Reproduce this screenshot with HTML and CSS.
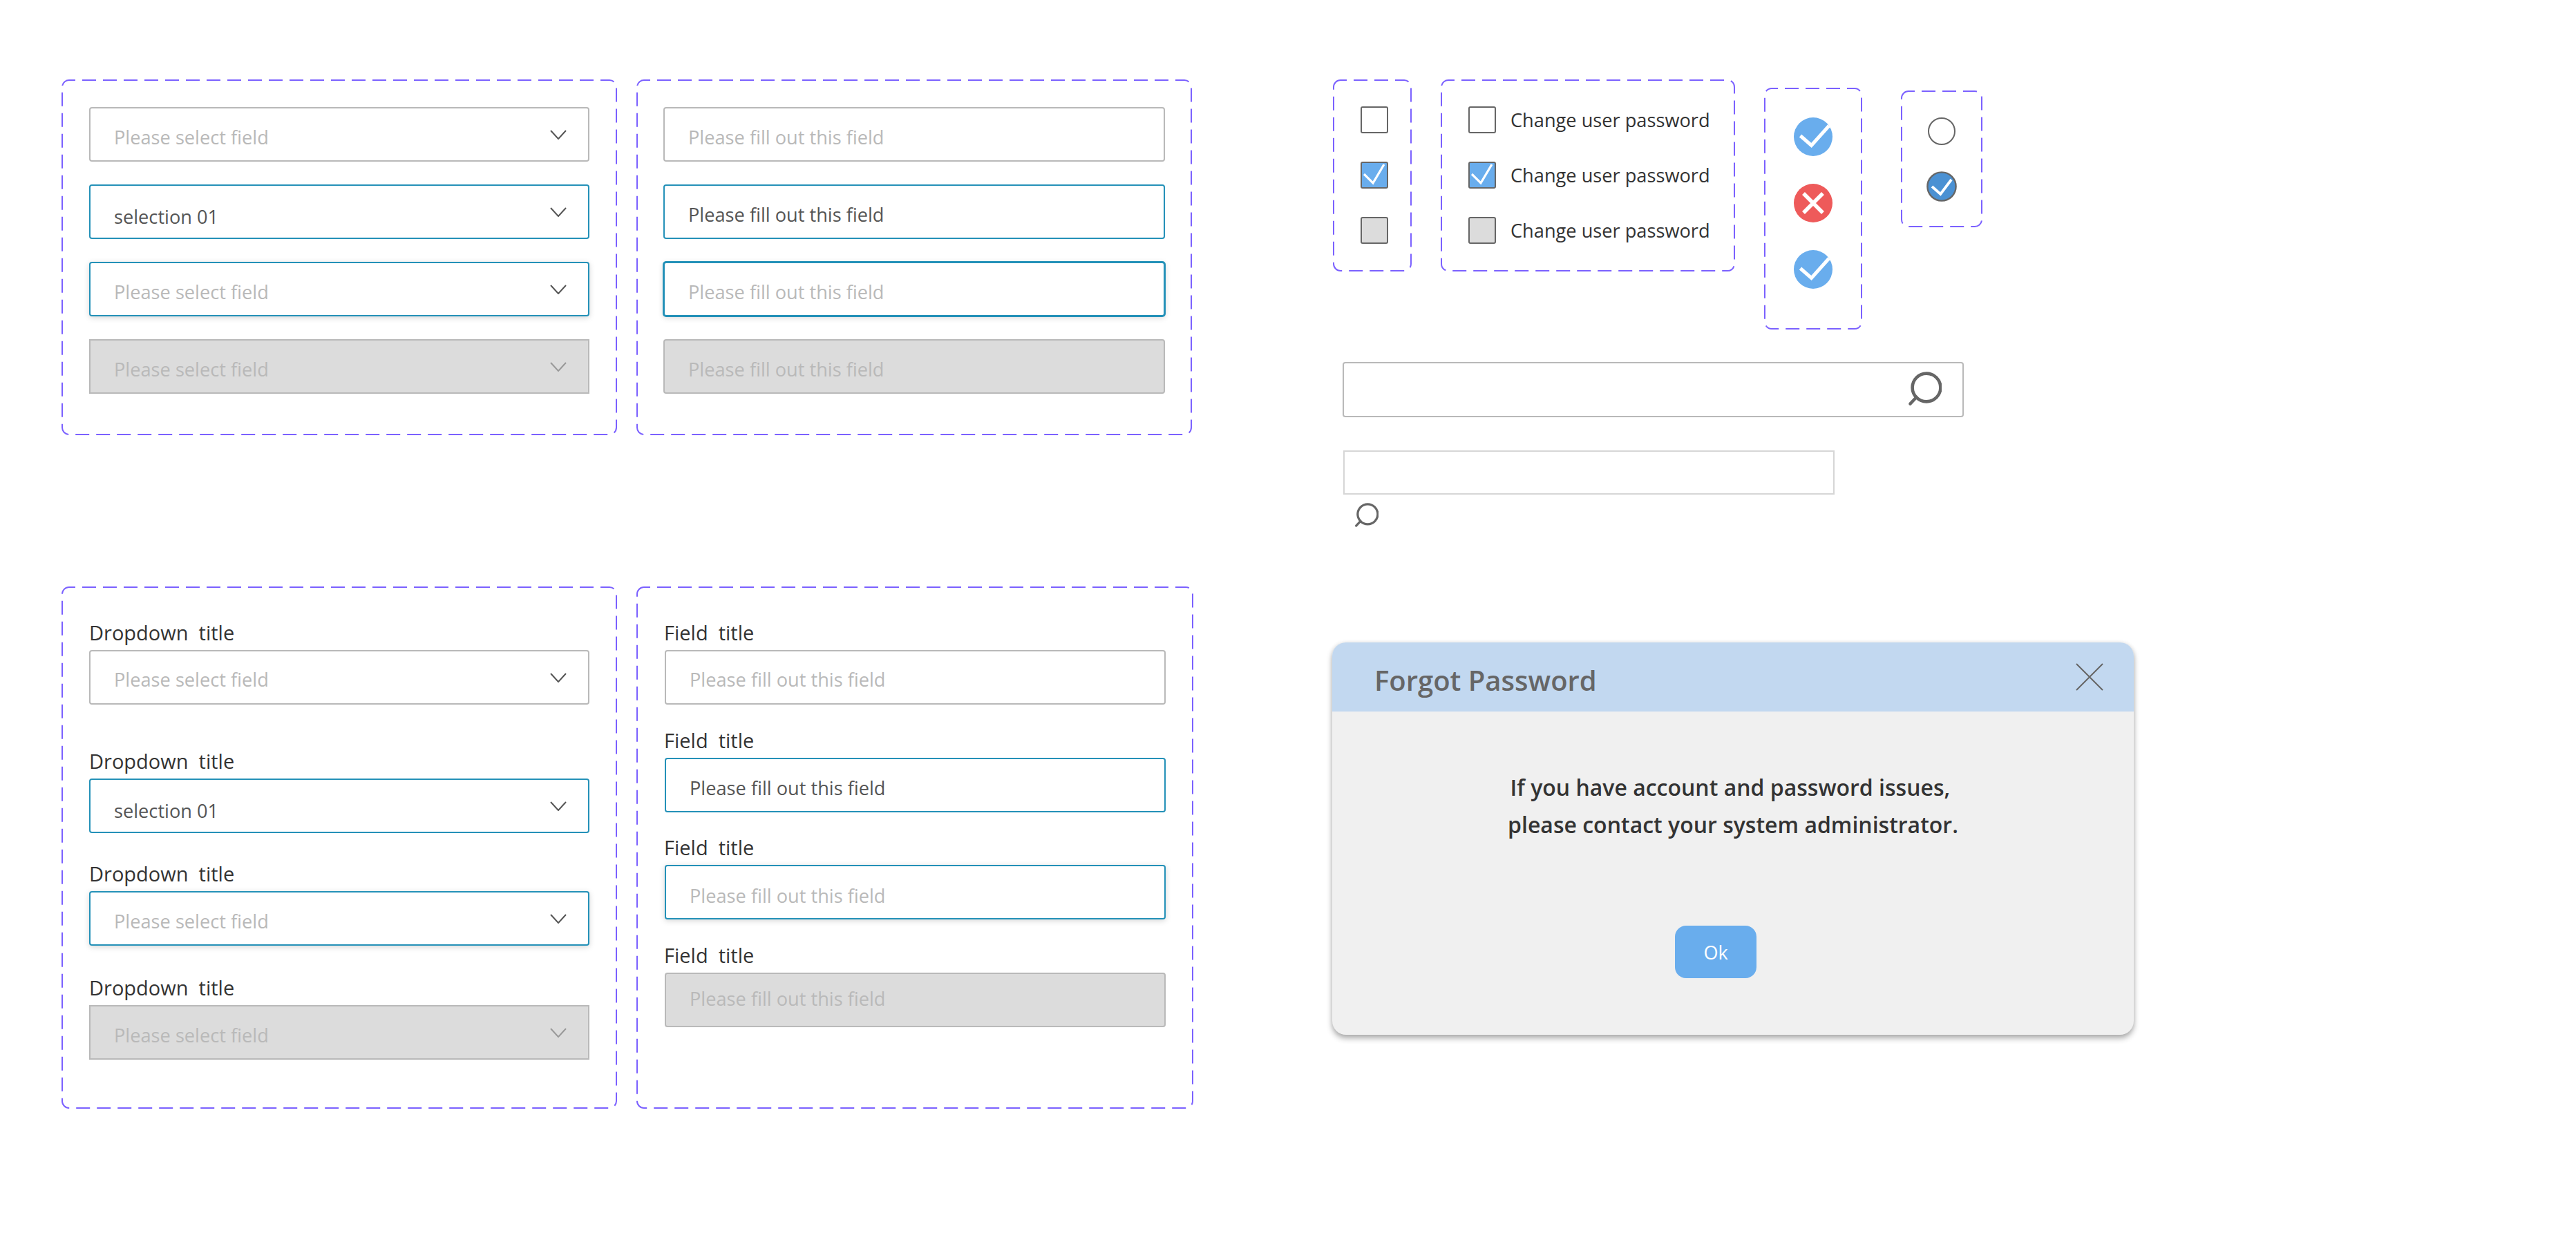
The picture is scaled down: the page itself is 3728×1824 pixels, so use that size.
FILE: index.html
```html
<!DOCTYPE html>
<html lang="en">
<head>
<meta charset="utf-8">
<title>Form components</title>
<link rel="stylesheet" href="styles.css">
</head>
<body>
<svg class="defs" width="0" height="0" aria-hidden="true">
  <symbol id="chev" viewBox="0 0 24 14"><path d="M1 1 L12 13 L23 1" fill="none" stroke="currentColor" stroke-width="2"/></symbol>
  <symbol id="box-check" viewBox="0 0 40 39"><path d="M5 18 L18 31 L34 4" fill="none" stroke="#fff" stroke-width="3.2"/></symbol>
  <symbol id="status-ok" viewBox="0 0 56 56"><circle cx="28" cy="28" r="28" fill="#69aded"/><path d="M9.5 26.5 L25.5 40.5 L51 12" fill="none" stroke="#fff" stroke-width="5"/></symbol>
  <symbol id="status-err" viewBox="0 0 56 56"><circle cx="28" cy="28" r="28" fill="#ee5a5a"/><path d="M14 14 L42 42 M42 14 L14 42" fill="none" stroke="#fff" stroke-width="5.5"/></symbol>
  <symbol id="mag" viewBox="0 0 52 52"><circle cx="30" cy="23" r="20.4" fill="none" stroke="#666" stroke-width="4.6"/><path d="M15.5 37 L6.5 46.5" fill="none" stroke="#666" stroke-width="4.6" stroke-linecap="round"/></symbol>
</svg>

<main class="page">
  <div class="col-left">
    <div class="row row-top">
      <section class="panel panel-a">
        <svg class="dash"><rect/></svg>
        <div class="stack stack-plain">
          <div class="field t8"><span class="ph">Please select field</span><svg class="chev"><use href="#chev"/></svg></div>
          <div class="field on t13"><span class="val">selection 01</span><svg class="chev"><use href="#chev"/></svg></div>
          <div class="field on focus t8"><span class="ph">Please select field</span><svg class="chev"><use href="#chev"/></svg></div>
          <div class="field off square t8"><span class="ph">Please select field</span><svg class="chev"><use href="#chev"/></svg></div>
        </div>
      </section>
      <section class="panel panel-a">
        <svg class="dash"><rect/></svg>
        <div class="stack stack-plain inset-r">
          <div class="field t8 wide"><span class="ph">Please fill out this field</span></div>
          <div class="field on t7 wide"><span class="val">Please fill out this field</span></div>
          <div class="field on focus heavy t8 wide"><span class="ph">Please fill out this field</span></div>
          <div class="field off t8 wide"><span class="ph">Please fill out this field</span></div>
        </div>
      </section>
    </div>

    <div class="row row-bottom">
      <section class="panel panel-b">
        <svg class="dash"><rect/></svg>
        <div class="labelled">
          <div class="item"><label class="lbl">Dropdown  title</label><div class="field t6"><span class="ph">Please select field</span><svg class="chev"><use href="#chev"/></svg></div></div>
          <div class="item gap-a"><label class="lbl">Dropdown  title</label><div class="field on t13"><span class="val">selection 01</span><svg class="chev"><use href="#chev"/></svg></div></div>
          <div class="item gap-b"><label class="lbl">Dropdown  title</label><div class="field on focus t8"><span class="ph">Please select field</span><svg class="chev"><use href="#chev"/></svg></div></div>
          <div class="item gap-d"><label class="lbl">Dropdown  title</label><div class="field off square t7"><span class="ph">Please select field</span><svg class="chev"><use href="#chev"/></svg></div></div>
        </div>
      </section>
      <section class="panel panel-b panel-b2">
        <svg class="dash"><rect/></svg>
        <div class="labelled inset-r2">
          <div class="item"><label class="lbl">Field  title</label><div class="field t6 wide2"><span class="ph">Please fill out this field</span></div></div>
          <div class="item gap-c"><label class="lbl">Field  title</label><div class="field on t8 wide2"><span class="val">Please fill out this field</span></div></div>
          <div class="item gap-c"><label class="lbl">Field  title</label><div class="field on focus t9 wide2"><span class="ph">Please fill out this field</span></div></div>
          <div class="item gap-c"><label class="lbl">Field  title</label><div class="field off up wide2"><span class="ph">Please fill out this field</span></div></div>
        </div>
      </section>
    </div>
  </div>

  <div class="col-right">
    <div class="controls">
      <section class="panel panel-check">
        <svg class="dash"><rect/></svg>
        <div class="check-list">
          <span class="box"></span>
          <span class="box checked"><svg class="box-tick"><use href="#box-check"/></svg></span>
          <span class="box dis"></span>
        </div>
      </section>
      <section class="panel panel-check-label">
        <svg class="dash"><rect/></svg>
        <div class="check-list">
          <div class="check-row"><span class="box"></span><span class="check-text">Change user password</span></div>
          <div class="check-row"><span class="box checked"><svg class="box-tick"><use href="#box-check"/></svg></span><span class="check-text">Change user password</span></div>
          <div class="check-row"><span class="box dis"></span><span class="check-text">Change user password</span></div>
        </div>
      </section>
      <section class="panel panel-status">
        <svg class="dash"><rect/></svg>
        <div class="status-list">
          <svg class="status"><use href="#status-ok"/></svg>
          <svg class="status"><use href="#status-err"/></svg>
          <svg class="status"><use href="#status-ok"/></svg>
        </div>
      </section>
      <section class="panel panel-radio">
        <svg class="dash"><rect/></svg>
        <div class="radio-list">
          <span class="radio"></span>
          <svg class="radio-on" viewBox="0 0 44 44"><circle cx="22" cy="22" r="20.6" fill="#4b91d3" stroke="#666" stroke-width="2.4"/><path d="M8 22 L20.3 33 L36 12" fill="none" stroke="#fff" stroke-width="3.8"/></svg>
        </div>
      </section>
    </div>

    <div class="search-a">
      <svg class="mag-a"><use href="#mag"/></svg>
    </div>
    <div class="search-b"></div>
    <svg class="mag-b"><use href="#mag"/></svg>

    <section class="dialog">
      <header class="dialog-head">
        <h2 class="dialog-title">Forgot Password</h2>
        <svg class="dialog-close" viewBox="0 0 40 40"><path d="M1 1 L39 39 M39 1 L1 39" fill="none" stroke="#666" stroke-width="2"/></svg>
      </header>
      <div class="dialog-body">
        <p class="dialog-msg">If you have account and password issues,&nbsp;<br>please contact your system administrator.</p>
        <button class="dialog-ok" type="button">Ok</button>
      </div>
    </section>
  </div>
</main>
</body>
</html>
```

FILE: styles.css
```css
* { box-sizing: border-box; }
html, body { margin: 0; padding: 0; background: #fff; }
body { font-family: "Open Sans", "Noto Sans", sans-serif; color: #333; }
.defs { position: absolute; }

.page { display: flex; width: 3728px; height: 1824px; overflow: hidden; }
.col-left { padding: 115px 0 0 89px; width: 1928px; flex: none; }
.col-right { display: flex; flex-direction: column; align-items: flex-start; padding-top: 115px; }

.row { display: flex; gap: 28px; }
.row-bottom { margin-top: 219px; }

.panel { position: relative; flex: none; }
.dash { position: absolute; inset: 0; width: 100%; height: 100%; pointer-events: none; }
.dash rect {
  x: 1px; y: 1px; width: calc(100% - 2px); height: calc(100% - 2px); rx: 10px;
  fill: none; stroke: #7b61ff; stroke-width: 2; stroke-dasharray: 20 10; stroke-dashoffset: 11;
}

.panel-a { width: 804px; height: 515px; }
.panel-b { width: 804px; height: 756px; }
.panel-b2 { width: 806px; }

.stack { display: flex; flex-direction: column; gap: 33px; padding: 40px 40px 0; }
.inset-r { padding-left: 39px; padding-right: 39px; }

.field {
  display: flex; align-items: center; justify-content: space-between;
  width: 724px; height: 79px; padding: 0 31px 0 34px;
  background: #fff; border: 2px solid #b9b9b9; border-radius: 4px;
  font-size: 27.2px; white-space: nowrap;
}
.wide { width: 726px; }
.wide2 { width: 725px; }
.field.on { border-color: #2491b8; }
.field.focus { box-shadow: 0 2px 8px rgba(0, 0, 0, .16); }
.field.heavy { box-shadow: 0 0 0 1px #2491b8, 0 2px 8px rgba(0, 0, 0, .16); }
.field.off { background: #dcdcdc; }
.field.square { border-radius: 0; }
.field.off .chev { color: #999; }
.ph { color: #b9b9b9; }
.val { color: #555; }
.t6 > span { padding-top: 6px; }
.t7 > span { padding-top: 7px; }
.t8 > span { padding-top: 8px; }
.t9 > span { padding-top: 9px; }
.t13 > span { padding-top: 13px; }
.up > span { padding-bottom: 4px; }

.chev { width: 24px; height: 14px; color: #555; flex: none; }

.labelled { padding: 49px 40px 0; }
.inset-r2 { padding-left: 41px; padding-right: 40px; }
.inset-r2 .lbl { margin-left: -1px; }
.item { display: flex; flex-direction: column; }
.gap-a { margin-top: 64px; }
.gap-b { margin-top: 41px; }
.gap-c { margin-top: 33.5px; }
.gap-d { margin-top: 43px; }
.lbl { display: block; margin-bottom: 7px; font-size: 29px; line-height: 36px; color: #333; white-space: pre; }

.controls { display: flex; align-items: flex-start; gap: 42px; margin-left: 1px; height: 362px; }
.panel-check { width: 114px; height: 278px; padding: 39px 0 0 40px; }
.panel-check-label { width: 426px; height: 278px; padding: 39px 0 0 40px; }
.check-list { display: flex; flex-direction: column; gap: 41px; }
.check-row { display: flex; align-items: center; gap: 21px; height: 39px; }
.box { display: block; position: relative; width: 40px; height: 39px; border: 2px solid #666; border-radius: 3px; background: #fff; flex: none; }
.box.checked { background: #69aded; }
.box.dis { background: #dcdcdc; }
.box-tick { position: absolute; inset: -2px; width: 40px; height: 39px; }
.check-text { font-size: 27.2px; color: #333; white-space: nowrap; }

.panel-status { width: 142px; height: 350px; margin-top: 12px; padding-top: 43px; }
.status-list { display: flex; flex-direction: column; align-items: center; gap: 40px; }
.status { width: 56px; height: 56px; display: block; }

.panel-radio { width: 118px; height: 198px; margin-top: 16px; margin-left: 14px; padding-top: 37px; }
.radio-list { display: flex; flex-direction: column; align-items: center; gap: 36px; }
.radio { display: block; width: 40px; height: 40px; margin: 2px 0; border: 2.4px solid #666; border-radius: 50%; background: #fff; }
.radio-on { display: block; width: 44px; height: 44px; }

.search-a {
  display: flex; justify-content: flex-end; align-items: center;
  width: 899px; height: 80px; margin: 47px 0 0 15px; padding-right: 30px;
  border: 2px solid #b9b9b9; border-radius: 4px; background: #fff;
}
.mag-a { width: 52px; height: 52px; display: block; }
.search-b { width: 711px; height: 64px; margin: 48px 0 0 16px; border: 2px solid #d6d6d6; background: #fff; }
.mag-b { width: 37px; height: 37px; display: block; margin: 12px 0 0 30px; }

.dialog {
  width: 1160px; height: 568px; margin-top: 165px;
  border-radius: 20px; overflow: hidden; background: #f0f0f0;
  box-shadow: 0 5px 8px rgba(0, 0, 0, .32), 0 0 6px rgba(0, 0, 0, .08);
}
.dialog-head {
  display: flex; align-items: center; justify-content: space-between;
  height: 100px; padding: 0 44px 0 61px; background: #c2d8f0;
}
.dialog-title { margin: 0; padding-top: 9px; font-size: 40px; font-weight: 600; color: #666; line-height: 1.2; }
.dialog-close { width: 40px; height: 40px; display: block; }
.dialog-body { display: flex; flex-direction: column; align-items: flex-start; padding-top: 83px; }
.dialog-msg {
  width: 100%; margin: 0; font-size: 32px; font-weight: 600; line-height: 54px;
  text-align: center; color: #333;
}
.dialog-ok {
  width: 118px; height: 76px; margin: 119px 0 0 496px; border: 0; border-radius: 16px;
  background: #69aded; color: #fff; font: 500 27px "Open Sans", sans-serif;
}
```
